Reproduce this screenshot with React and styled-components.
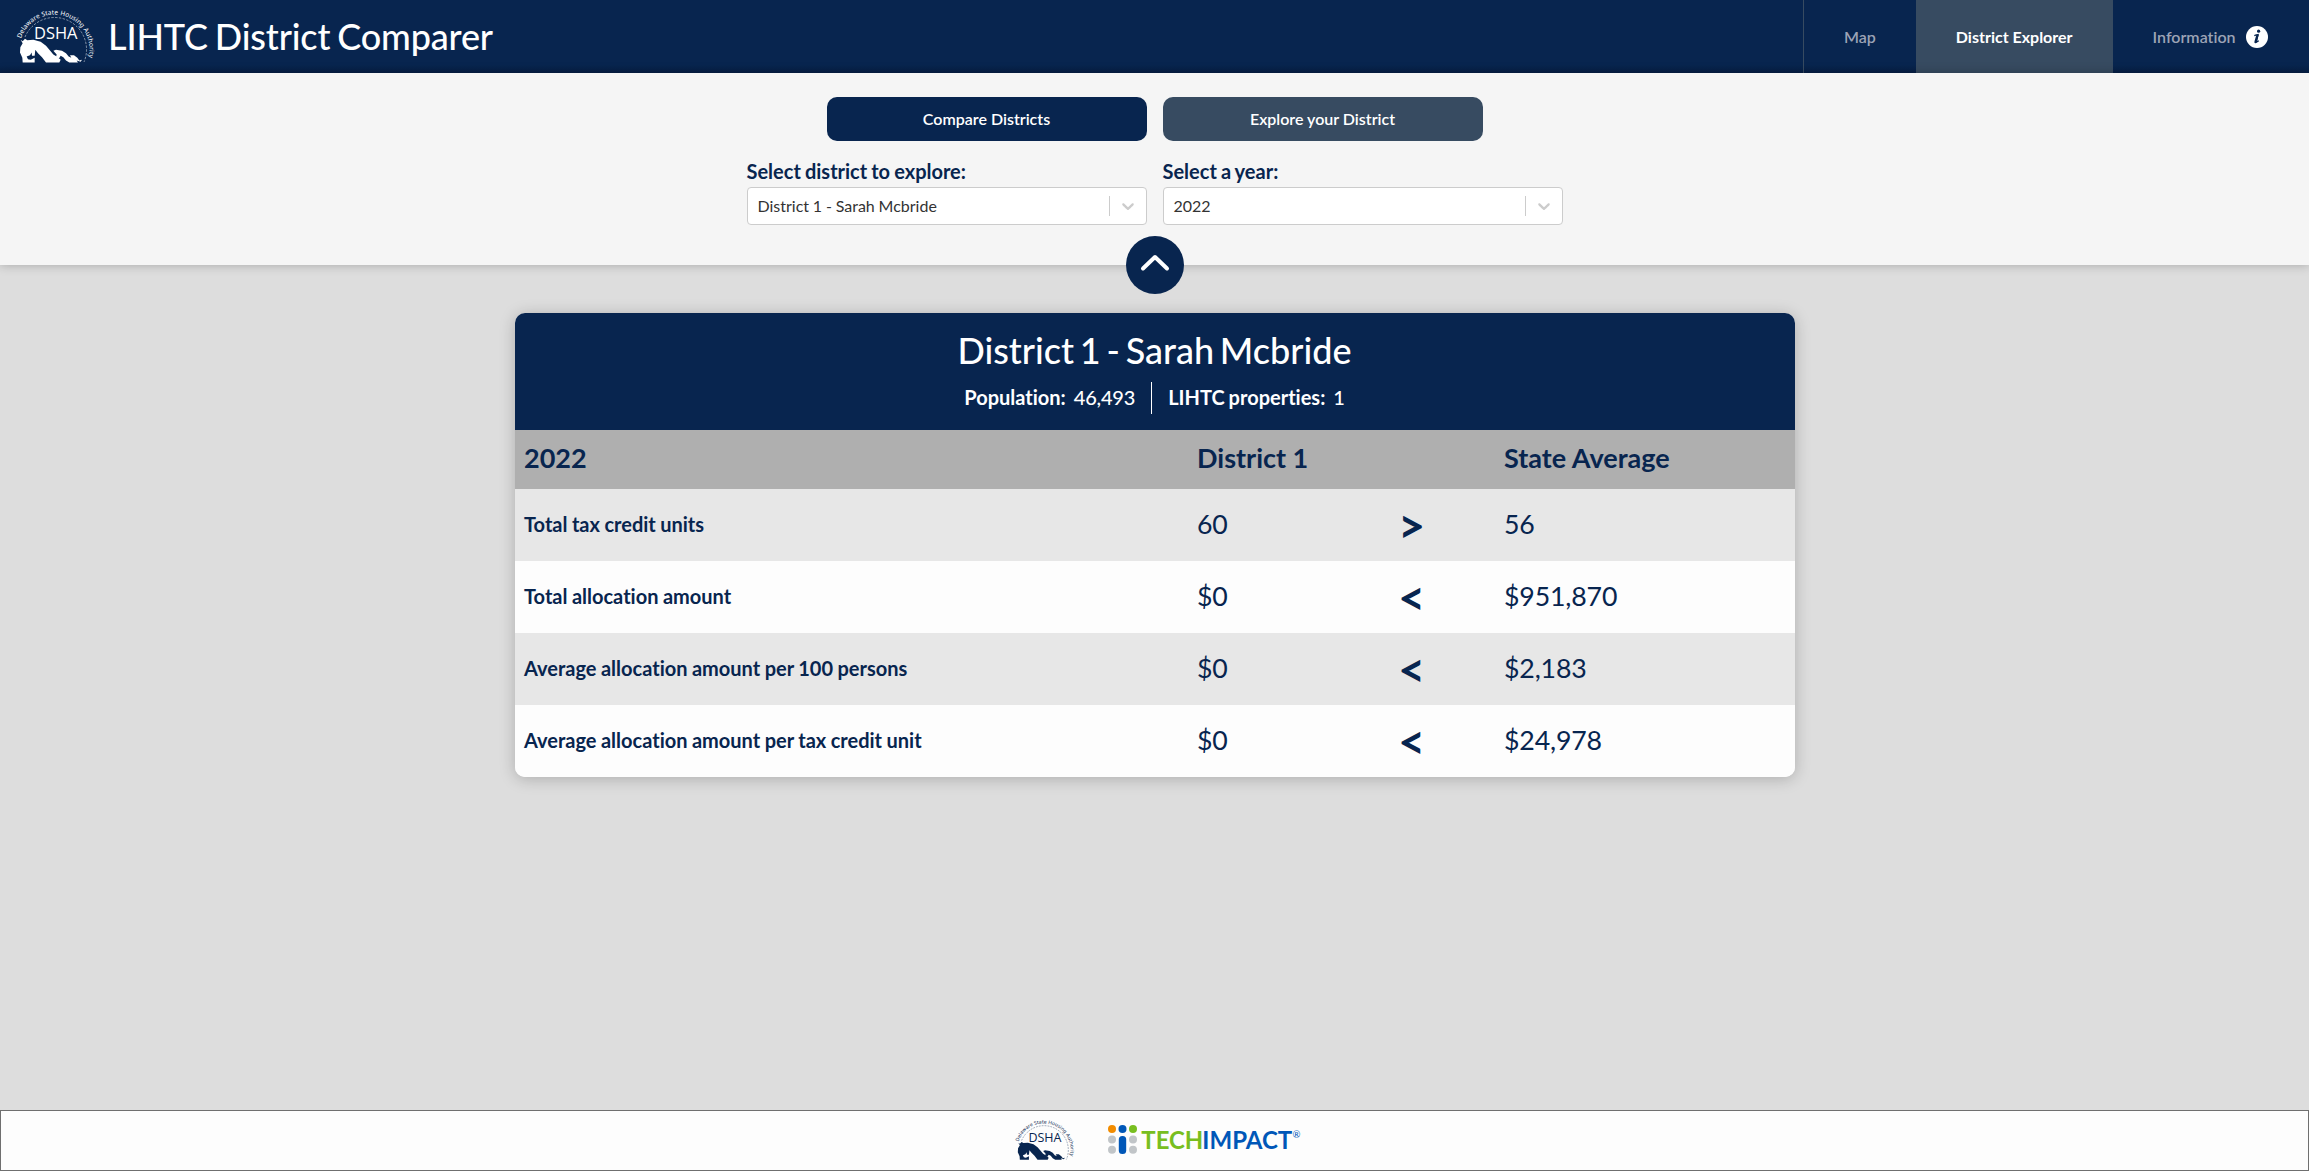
import React from "react";
import styled, { createGlobalStyle } from "styled-components";

const NAVY = "#08254f";
const SLATE = "#374b61";

const GlobalStyle = createGlobalStyle`
  * { box-sizing: border-box; }
  body {
    margin: 0;
    background: #ddd;
    color: ${NAVY};
    font-family: Lato, "Liberation Sans", sans-serif;
    font-size: 16px;
    font-variant-ligatures: no-common-ligatures;
    line-height: 1.5;
    word-spacing: -0.055em;
  }
`;

const Page = styled.div`
  display: flex;
  flex-direction: column;
  height: 1171px;
`;

const Header = styled.header`
  display: flex;
  justify-content: space-between;
  flex: none;
  height: 73px;
  background: linear-gradient(to bottom, ${NAVY} 65px, #061f45 73px);
`;

const Brand = styled.div`
  display: flex;
  align-items: center;
  gap: 14px;
  padding-left: 15px;
`;

const Title = styled.h1`
  margin: 0;
  color: #fff;
  font-size: 36px;
  font-weight: 500;
  line-height: 73px;
  letter-spacing: -0.15px;
  word-spacing: -2px;
`;

const Nav = styled.nav`
  display: flex;
  border-left: 1px solid ${SLATE};
  word-spacing: 0;
`;

const NavItem = styled.a`
  display: flex;
  align-items: center;
  gap: 10px;
  padding: 0 ${(p) => (p.$last ? 41.5 : 40)}px 0 40px;
  font-weight: ${(p) => (p.$active ? 700 : 600)};
  color: ${(p) => (p.$active ? "#fff" : "#9ca3b5")};
  background: ${(p) => (p.$active ? SLATE : "transparent")};
`;

const Controls = styled.section`
  position: relative;
  z-index: 1;
  display: flex;
  flex-direction: column;
  align-items: center;
  flex: none;
  height: 192px;
  padding-top: 24px;
  background: #f5f5f5;
  box-shadow: 0 0 10px rgba(0, 0, 0, 0.25);
`;

const ButtonRow = styled.div`
  display: flex;
  gap: 16px;
`;

const ModeButton = styled.button`
  width: 320px;
  height: 44px;
  padding: 0 0 1px;
  border: 0;
  border-radius: 10px;
  color: #fff;
  font: 600 16px Lato, sans-serif;
  background: ${(p) => (p.$active ? SLATE : NAVY)};
`;

const FieldRow = styled.div`
  display: flex;
  gap: 16px;
  margin-top: 15px;
`;

const Field = styled.div`
  width: 400px;
`;

const Label = styled.div`
  height: 31px;
  font-size: 20px;
  font-weight: 700;
  line-height: 30px;
  word-spacing: -0.04em;
`;

const Select = styled.div`
  display: flex;
  align-items: center;
  height: 38px;
  border: 1px solid #ccc;
  border-radius: 4px;
  background: #fff;
  color: #333;
`;

const SelectValue = styled.span`
  flex: 1;
  padding-left: 10px;
  word-spacing: -0.3px;
`;

const SelectIndicator = styled.span`
  display: flex;
  align-items: center;
  justify-content: center;
  width: 37px;
  height: 20px;
  border-left: 1px solid #ccc;
  color: #ccc;
`;

const Collapse = styled.button`
  position: absolute;
  bottom: -29px;
  left: 50%;
  display: flex;
  align-items: center;
  justify-content: center;
  width: 58px;
  height: 58px;
  padding: 0 0 4px;
  border: 0;
  border-radius: 50%;
  transform: translateX(-50%);
  background: ${NAVY};
`;

const Main = styled.main`
  display: flex;
  flex: 1;
  justify-content: center;
  align-items: flex-start;
  padding-top: 48px;
`;

const Card = styled.article`
  width: 1280px;
  overflow: hidden;
  border-radius: 10px;
  background: #fdfdfd;
  box-shadow: 0 2px 16px rgba(0, 0, 0, 0.22);
`;

const CardHead = styled.div`
  display: flex;
  flex-direction: column;
  align-items: center;
  height: 117px;
  padding-top: 10px;
  color: #fff;
  background: ${NAVY};
`;

const CardTitle = styled.h2`
  margin: 0;
  font-size: 36px;
  font-weight: 500;
  line-height: 54px;
  word-spacing: -3.300px;
`;

const Facts = styled.div`
  display: flex;
  margin-top: 5px;
  font-size: 20px;
  line-height: 30px;
`;

const Fact = styled.div`
  display: flex;
  gap: 8px;
  height: 32px;
  padding: 0 16px;
  & + & { border-left: 1px solid #fff; }
`;

const FactValue = styled.span`
  font-weight: 500;
  letter-spacing: -0.2px;
`;

const Row = styled.div`
  display: grid;
  grid-template-columns: 673px 201px 106px 1fr;
  align-items: center;
  height: ${(p) => (p.$head ? 59 : 72)}px;
  padding-left: 9.500px;
  padding-bottom: ${(p) => (p.$head ? 3 : 2)}px;
  font-size: ${(p) => (p.$head ? 27 : 26.7)}px;
  font-weight: ${(p) => (p.$head ? 700 : 400)};
  word-spacing: 0;
  background: ${(p) => (p.$head ? "#afafaf" : p.$shade ? "#e7e7e7" : "#fdfdfd")};
`;

const RowLabel = styled.span`
  font-size: 20px;
  font-weight: 700;
  word-spacing: -0.4px;
`;

const Value = styled.span`
  letter-spacing: -0.15px;
`;

const Sign = styled.span`
  padding-top: 1px;
  font-size: 47px;
  font-weight: 700;
  line-height: 60px;
`;

const Footer = styled.footer`
  display: flex;
  flex: none;
  align-items: center;
  justify-content: center;
  gap: 34px;
  height: 61px;
  padding: 0 0 1px 6px;
  border: 1px solid #6f6f6f;
  background: #fdfdfd;
`;

const LogoSvg = styled.svg`
  overflow: visible;
  word-spacing: 0;
`;

function DshaLogo({ width, color, id }) {
  return (
    <LogoSvg width={width} height={(width * 54) / 79} viewBox="0 0 79 54" fill={color}>
      <path id={id} d="M6 28.500 A35 35 0 0 1 72.700 51 L71.500 60" fill="none" />
      <text fontFamily="'Noto Sans', sans-serif" fontSize="6.500" letterSpacing="0.100">
        <textPath href={`#${id}`}>Delaware State Housing Authority</textPath>
      </text>
      <path
        d="M10 27 A32 32 0 0 1 69 52"
        fill="none"
        stroke={color}
        strokeWidth="0.500"
        strokeDasharray="2.400 1.400"
      />
      <text
        x="19"
        y="29.300"
        fontFamily="'Open Sans', sans-serif"
        fontSize="16"
        textLength="43.500"
        lengthAdjust="spacingAndGlyphs"
      >
        DSHA
      </text>
      <g transform="scale(0.3333) translate(-45 -28.500)">
        <path d="M62 118 L68 122 L75 115 L82 119 L100 118 L122 124 L138 136 L150 150 L160 162 L170 168 L182 178 L178 186 L138 186 L126 170 L114 158 L106 148 L104 166 L96 166 L95 156 L90 164 L80 168 L84 176 L92 178 L104 172 V186 H68 L67 172 L60 156 L61 140 L68 128 Z" />
        <path d="M160 151 L168 148 L186 151 L198 158 L206 168 L214 172 L210 164 L222 164 L232 172 L238 180 L246 178 L242 184 L230 180 L234 186 H208 L198 180 L190 170 L182 166 L177 174 L168 170 L170 162 Z" />
      </g>
    </LogoSvg>
  );
}

function TechImpactLogo() {
  const gray = "#c1c5c8";
  const blue = "#0057b8";
  const green = "#78be20";
  return (
    <svg width="194" height="32" viewBox="0 0 194 32">
      <circle cx="4" cy="5" r="4" fill="#f28c00" />
      <circle cx="14.500" cy="5" r="4" fill={blue} />
      <circle cx="25" cy="5" r="4" fill={green} />
      <circle cx="4" cy="15.500" r="4" fill={gray} />
      <circle cx="25" cy="15.500" r="4" fill={gray} />
      <circle cx="4" cy="25.700" r="4" fill={gray} />
      <circle cx="25" cy="25.700" r="4" fill={gray} />
      <rect x="10.800" y="12" width="7.400" height="18" rx="3.500" fill={blue} />
      <g fontFamily="Lato, sans-serif" fontSize="24.500" fontWeight="700">
        <text x="33.300" y="24.500" fill={green} textLength="62" lengthAdjust="spacingAndGlyphs">
          TECH
        </text>
        <text x="94.300" y="24.500" fill={blue} textLength="90" lengthAdjust="spacingAndGlyphs">
          IMPACT
        </text>
      </g>
      <text x="184.500" y="13.500" fill={blue} fontFamily="Lato, sans-serif" fontSize="9.500">
        ®
      </text>
    </svg>
  );
}

function InfoIcon() {
  return (
    <svg width="22" height="22" viewBox="0 0 22 22">
      <circle cx="11" cy="11" r="11" fill="#fff" />
      <circle cx="12.600" cy="5.200" r="1.600" fill={NAVY} />
      <path
        d="M8.300 9.600 Q10.500 8.800 12 8.600 L10.300 15.200 Q10.100 16.400 12.800 14.700"
        fill="none"
        stroke={NAVY}
        strokeWidth="1.300"
      />
      <path
        d="M10.300 9 L12.900 8.400 L11 15.400 Q11 16.200 12.500 15.200 Q10.500 17.600 9.200 17.300 Q8 17 8.500 15.200 Z"
        fill={NAVY}
      />
    </svg>
  );
}

function SelectChevron() {
  return (
    <svg width="20" height="20" viewBox="0 0 20 20" fill="currentColor">
      <path d="M4.516 7.548c0.436-0.446 1.043-0.481 1.576 0l3.908 3.747 3.908-3.747c0.533-0.481 1.141-0.446 1.574 0 0.436 0.445 0.408 1.197 0 1.615-0.406 0.418-4.695 4.502-4.695 4.502-0.217 0.223-0.502 0.335-0.787 0.335s-0.570-0.112-0.789-0.335c0 0-4.287-4.084-4.695-4.502s-0.436-1.170 0-1.615z" />
    </svg>
  );
}

function Dropdown({ label, value }) {
  return (
    <Field>
      <Label>{label}</Label>
      <Select>
        <SelectValue>{value}</SelectValue>
        <SelectIndicator>
          <SelectChevron />
        </SelectIndicator>
      </Select>
    </Field>
  );
}

const rows = [
  ["Total tax credit units", "60", ">", "56"],
  ["Total allocation amount", "$0", "<", "$951,870"],
  ["Average allocation amount per 100 persons", "$0", "<", "$2,183"],
  ["Average allocation amount per tax credit unit", "$0", "<", "$24,978"],
];

export default function App() {
  return (
    <Page>
      <GlobalStyle />
      <Header>
        <Brand>
          <DshaLogo width={79} color="#fff" id="arc-header" />
          <Title>LIHTC District Comparer</Title>
        </Brand>
        <Nav>
          <NavItem>Map</NavItem>
          <NavItem $active>District Explorer</NavItem>
          <NavItem $last>
            Information
            <InfoIcon />
          </NavItem>
        </Nav>
      </Header>
      <Controls>
        <ButtonRow>
          <ModeButton>Compare Districts</ModeButton>
          <ModeButton $active>Explore your District</ModeButton>
        </ButtonRow>
        <FieldRow>
          <Dropdown label="Select district to explore:" value="District 1 - Sarah Mcbride" />
          <Dropdown label="Select a year:" value="2022" />
        </FieldRow>
        <Collapse aria-label="Collapse">
          <svg width="30" height="18" viewBox="0 0 30 18">
            <path
              d="M3 14.500 L15 3 L27 14.500"
              fill="none"
              stroke="#fff"
              strokeWidth="4"
              strokeLinecap="round"
              strokeLinejoin="round"
            />
          </svg>
        </Collapse>
      </Controls>
      <Main>
        <Card>
          <CardHead>
            <CardTitle>District 1 - Sarah Mcbride</CardTitle>
            <Facts>
              <Fact>
                <b>Population:</b>
                <FactValue>46,493</FactValue>
              </Fact>
              <Fact>
                <b>LIHTC properties:</b>
                <FactValue>1</FactValue>
              </Fact>
            </Facts>
          </CardHead>
          <Row $head>
            <span>2022</span>
            <span>District 1</span>
            <span />
            <span>State Average</span>
          </Row>
          {rows.map(([label, value, sign, average], i) => (
            <Row key={label} $shade={i % 2 === 0}>
              <RowLabel>{label}</RowLabel>
              <Value>{value}</Value>
              <Sign>{sign}</Sign>
              <Value>{average}</Value>
            </Row>
          ))}
        </Card>
      </Main>
      <Footer>
        <DshaLogo width={60} color={NAVY} id="arc-footer" />
        <TechImpactLogo />
      </Footer>
    </Page>
  );
}
